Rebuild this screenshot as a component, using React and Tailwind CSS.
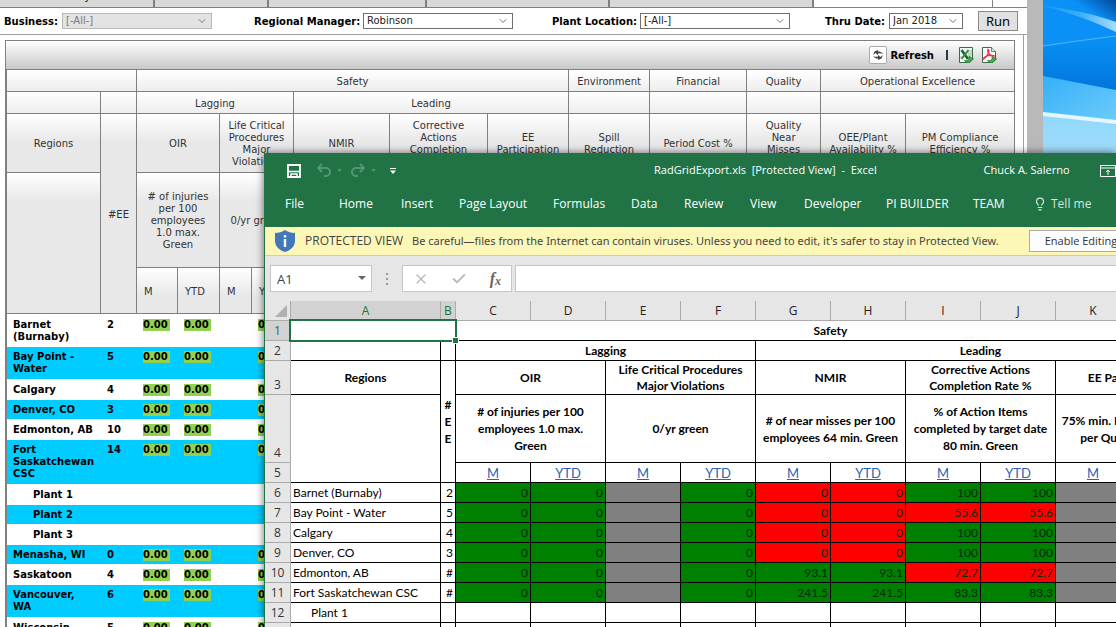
// /src/App.jsx
import { useState } from 'react';
import { Check, ChevronDown, Lightbulb, X } from 'lucide-react';

const regions = [
  { name: 'Barnet (Burnaby)', ee: 2, height: 'h-[33px]' },
  { name: 'Bay Point - Water', ee: 5, height: 'h-8' },
  { name: 'Calgary', ee: 4, height: 'h-[21px]' },
  { name: 'Denver, CO', ee: 3, height: 'h-[19px]' },
  { name: 'Edmonton, AB', ee: 10, height: 'h-[21px]' },
  { name: 'Fort Saskatchewan CSC', ee: 14, height: 'h-11' },
  { name: 'Plant 1', plant: true, height: 'h-[21px]' },
  { name: 'Plant 2', plant: true, height: 'h-[19px]' },
  { name: 'Plant 3', plant: true, height: 'h-[21px]' },
  { name: 'Menasha, WI', ee: 0, height: 'h-[19px]' },
  { name: 'Saskatoon', ee: 4, height: 'h-[21px]' },
  { name: 'Vancouver, WA', ee: 6, height: 'h-8' },
  { name: 'Wisconsin', ee: 5, height: 'h-[21px]' },
];

// g: 초록, r: 빨강, x: 회색(데이터 없음)
const fills = { g: 'bg-[#008000]', r: 'bg-[#ff0000]', x: 'bg-[#808080]' };

const sheetRows = [
  { no: 6, name: 'Barnet (Burnaby)', ee: '2', tone: 'ggxgrrggxx', values: ['0', '0', '', '0', '0', '0', '100', '100', '', ''] },
  { no: 7, name: 'Bay Point - Water', ee: '5', tone: 'ggxgrrrrxx', values: ['0', '0', '', '0', '0', '0', '55.6', '55.6', '', ''] },
  { no: 8, name: 'Calgary', ee: '4', tone: 'ggxgrrggxx', values: ['0', '0', '', '0', '0', '0', '100', '100', '', ''] },
  { no: 9, name: 'Denver, CO', ee: '3', tone: 'ggxgrrggxx', values: ['0', '0', '', '0', '0', '0', '100', '100', '', ''] },
  { no: 10, name: 'Edmonton, AB', ee: '#', tone: 'ggxgggrrxx', values: ['0', '0', '', '0', '93.1', '93.1', '72.7', '72.7', '', ''] },
  { no: 11, name: 'Fort Saskatchewan CSC', ee: '#', tone: 'ggxgggggxx', values: ['0', '0', '', '0', '241.5', '241.5', '83.3', '83.3', '', ''] },
  { no: 12, name: 'Plant 1', plant: true, ee: '', tone: '', values: ['', '', '', '', '', '', '', '', '', ''] },
  { no: '', name: '', ee: '', tone: '', values: ['', '', '', '', '', '', '', '', '', ''] },
];

const columns = ['C', 'D', 'E', 'F', 'G', 'H', 'I', 'J', 'K', 'L'];

const ribbonTabs = [
  { label: 'File', width: 'w-[54px]' },
  { label: 'Home', width: 'w-[62px]' },
  { label: 'Insert', width: 'w-[58px]' },
  { label: 'Page Layout', width: 'w-[94px]' },
  { label: 'Formulas', width: 'w-[78px]' },
  { label: 'Data', width: 'w-[53px]' },
  { label: 'Review', width: 'w-[66px]' },
  { label: 'View', width: 'w-[54px]' },
  { label: 'Developer', width: 'w-[82px]' },
  { label: 'PI BUILDER', width: 'w-[87px]' },
  { label: 'TEAM', width: 'w-[60px]' },
];

function Filter({ id, label, options, disabled, labelWidth, width, className }) {
  const [value, setValue] = useState(options[0]);
  return (
    <div className={`flex items-center ${className}`}>
      <label htmlFor={id} className={`${labelWidth} shrink-0 whitespace-nowrap font-bold`}>
        {label}
      </label>
      <div className={`relative ${width}`}>
        <select
          id={id}
          value={value}
          disabled={disabled}
          onChange={(e) => setValue(e.target.value)}
          className="block h-4 w-full appearance-none border border-[#707070] bg-white pl-[3px] leading-[14px] text-[#222] disabled:border-[#b8b8b8] disabled:bg-[#e3e3e3] disabled:text-[#7a7a7a] disabled:opacity-100"
        >
          {options.map((o) => (
            <option key={o}>{o}</option>
          ))}
        </select>
        <ChevronDown strokeWidth={2} className="pointer-events-none absolute right-1 top-0.5 size-3 text-[#777]" />
      </div>
    </div>
  );
}

function RefreshIcon() {
  return (
    <svg viewBox="0 0 12 12" className="size-3" fill="#444">
      <path d="M1 6l1.500-3.500L6 1v1.500c2 0 3.500.5 5 2.500-2-1-3.500-1-5-.5V6L3.500 4z" />
      <path d="M11 6L9.500 9.500 6 11V9.500C4 9.500 2.500 9 1 7c2 1 3.500 1 5 .5V6l2.500 2z" />
    </svg>
  );
}

function ExcelExportIcon() {
  return (
    <svg viewBox="0 0 16 16" className="size-4">
      <path d="M1.500 .5h13v11l-3 4h-10z" fill="#f1f8f2" stroke="#3b6a49" />
      <path d="M10 4h4M10 6h4M10 8h4M2 10h3" stroke="#8fc09a" />
      <path d="M3.500 3l6.500 9" stroke="#14662a" strokeWidth="2.600" />
      <path d="M10.500 3L3.500 12" stroke="#2f8a45" strokeWidth="2" />
      <path d="M6.500 13.500c3 .5 4.500-.5 4.500-2V9l4.500 3-4.500 4c-2 0-3.500-1-4.500-2.500z" fill="#45ad4d" stroke="#1d6b2c" strokeWidth=".7" />
    </svg>
  );
}

function PdfExportIcon() {
  return (
    <svg viewBox="0 0 16 16" className="size-4">
      <path d="M1.500 .5h9l4 4v8l-3 3h-10z" fill="#fff" stroke="#3d6a48" />
      <path d="M10.500 .5v4h4" fill="#dce9df" stroke="#3d6a48" strokeWidth=".8" />
      <path d="M7 2.500c2 1 .5 6-4.500 9.500 1-3 7-5 10.500-3-4 0-7-3-6-6.500z" fill="none" stroke="#e8344a" strokeWidth="1.500" />
      <path d="M6.500 13.500c3 .5 4.500-.5 4.500-2V9.500l4.500 2.500-4.500 4c-2 0-3.500-1-4.500-2.500z" fill="#45ad4d" stroke="#1d6b2c" strokeWidth=".7" />
    </svg>
  );
}

function HeadCell({ className = '', children, ...rest }) {
  return (
    <th
      className={`border-b border-r border-[#808080] bg-linear-to-b from-white to-[#e8e8e8] to-[28px] pt-0.5 pb-0 font-normal text-[#333] ${className}`}
      {...rest}
    >
      {children}
    </th>
  );
}

function Badge() {
  return <span className="block w-[27px] bg-[#92d050]">0.00</span>;
}

function RegionGrid() {
  return (
    <table className="w-full table-fixed border-separate border-spacing-0 border-l-2 border-[#808080] text-[10px] leading-3">
      <colgroup>
        <col className="w-[94px]" />
        <col className="w-9" />
        <col className="w-[41px]" />
        <col className="w-[42px]" />
        <col className="w-8" />
        <col className="w-[42px]" />
        <col className="w-24" />
        <col className="w-[98px]" />
        <col className="w-[81px]" />
        <col className="w-[81px]" />
        <col className="w-[97px]" />
        <col className="w-[74px]" />
        <col className="w-[85px]" />
        <col />
      </colgroup>
      <thead>
        <tr className="h-[22px]">
          <HeadCell colSpan={2} />
          <HeadCell colSpan={7}>Safety</HeadCell>
          <HeadCell>Environment</HeadCell>
          <HeadCell>Financial</HeadCell>
          <HeadCell>Quality</HeadCell>
          <HeadCell colSpan={2}>Operational Excellence</HeadCell>
        </tr>
        <tr className="h-[22px]">
          <HeadCell />
          <HeadCell />
          <HeadCell colSpan={4}>Lagging</HeadCell>
          <HeadCell colSpan={3}>Leading</HeadCell>
          <HeadCell />
          <HeadCell />
          <HeadCell />
          <HeadCell colSpan={2} />
        </tr>
        <tr className="h-[59px]">
          <HeadCell>Regions</HeadCell>
          <HeadCell rowSpan={3}>#EE</HeadCell>
          <HeadCell colSpan={2}>OIR</HeadCell>
          <HeadCell colSpan={2}>Life Critical Procedures Major Violations</HeadCell>
          <HeadCell>NMIR</HeadCell>
          <HeadCell className="px-3">Corrective Actions Completion Rate %</HeadCell>
          <HeadCell className="px-2">EE Participation</HeadCell>
          <HeadCell className="px-3">Spill Reduction</HeadCell>
          <HeadCell>Period Cost %</HeadCell>
          <HeadCell className="px-3">Quality Near Misses Rate</HeadCell>
          <HeadCell>OEE/Plant Availability %</HeadCell>
          <HeadCell>PM Compliance Efficiency %</HeadCell>
        </tr>
        <tr className="h-[95px]">
          <HeadCell rowSpan={2} />
          <HeadCell colSpan={2} className="px-2">
            # of injuries per 100 employees 1.0 max. Green
          </HeadCell>
          <HeadCell colSpan={2}>0/yr green</HeadCell>
          <HeadCell colSpan={8} />
        </tr>
        <tr className="h-[46px]">
          <HeadCell className="pl-[7px] text-left">M</HeadCell>
          <HeadCell className="pl-[7px] text-left">YTD</HeadCell>
          <HeadCell className="pl-[7px] text-left">M</HeadCell>
          <HeadCell className="pl-[7px] text-left">YTD</HeadCell>
          <HeadCell colSpan={8} />
        </tr>
      </thead>
      <tbody className="font-bold text-black">
        {regions.map((r, i) => {
          const pad = i % 2 ? 'pt-1' : 'pt-[5px]';
          return (
            <tr key={r.name} className={`align-top ${r.height} ${i % 2 ? 'bg-[#00ccff]' : 'bg-white'}`}>
              <td className={`${pad} pb-0 pr-1.5 ${r.plant ? 'pl-[26px]' : 'pl-1.5'}`}>{r.name}</td>
              <td className={`${pad} pb-0 pl-1.5`}>{r.ee}</td>
              <td className={`${pad} pb-0 pl-1.5`}>{!r.plant && <Badge />}</td>
              <td className={`${pad} pb-0 pl-1.5`}>{!r.plant && <Badge />}</td>
              <td />
              <td className={`${pad} pb-0 pl-1.5`}>{!r.plant && <Badge />}</td>
              <td colSpan={8} />
            </tr>
          );
        })}
      </tbody>
    </table>
  );
}

function BrowserWindow() {
  return (
    <main className="flex min-w-0 flex-1 flex-col bg-white font-['DejaVu_Sans',sans-serif] text-[10px] text-black">
      <div className="flex h-2 shrink-0 overflow-hidden border-b border-[#808080]">
        <div className="w-[155px] border-r-2 border-[#808080] bg-[#d8d8d8] pl-[42px]">
          <span className="-mt-[9px] block leading-3">Summary</span>
        </div>
        <div className="w-[114px] border-r-2 border-[#808080] bg-[#d8d8d8]" />
        <div className="w-[158px] border-r-2 border-[#808080] bg-[#d8d8d8]" />
        <div className="w-[183px] border-r-2 border-[#808080] bg-[#d8d8d8]" />
        <div className="w-[204px] border-r-2 border-[#808080] bg-[#d8d8d8]" />
        <div className="w-[179px] border-r border-[#808080]" />
      </div>

      <div className="flex h-[27px] shrink-0 items-center border-b border-[#a0a0a0] pl-1">
        <Filter id="business" label="Business:" options={['[-All-]']} disabled labelWidth="w-[58px]" width="w-[150px]" className="" />
        <Filter id="manager" label="Regional Manager:" options={['Robinson']} labelWidth="w-[109px]" width="w-[150px]" className="ml-[42px]" />
        <Filter id="plant" label="Plant Location:" options={['[-All-]']} labelWidth="w-[88px]" width="w-[150px]" className="ml-[39px]" />
        <Filter id="thru" label="Thru Date:" options={['Jan 2018']} labelWidth="w-[64px]" width="w-[74px]" className="ml-[35px]" />
        <button type="button" className="ml-[15px] h-5 w-10 border border-[#8a8a8a] bg-[#e1e1e1] font-['Noto_Sans',sans-serif] text-[13px] leading-[18px]">
          Run
        </button>
      </div>

      <div className="mr-[3px] flex-1 border-r border-[#a0a0a0] pl-[5px] pr-2 pt-[5px]">
        <div className="flex h-[30px] items-center border border-[#808080] bg-linear-to-b from-white to-[#c8c8c8] pr-[17px]">
          <button type="button" className="ml-auto flex items-center gap-[3px] text-[10px] font-bold">
            <span className="flex size-[18px] items-center justify-center rounded-xs border border-[#aaa] bg-white">
              <RefreshIcon />
            </span>
            Refresh
          </button>
          <span className="ml-3 h-2.5 w-0.5 bg-[#24394d]" />
          <button type="button" aria-label="Export to Excel" className="ml-2.5">
            <ExcelExportIcon />
          </button>
          <button type="button" aria-label="Export to PDF" className="ml-[7px]">
            <PdfExportIcon />
          </button>
        </div>
        <RegionGrid />
      </div>
    </main>
  );
}

function Wallpaper() {
  return (
    <svg viewBox="0 0 73 160" preserveAspectRatio="none" className="h-40 w-[73px] shrink-0">
      <defs>
        <linearGradient id="sky" x1="0" y1="1" x2="1" y2="0">
          <stop offset="0" stopColor="#0a90f6" />
          <stop offset=".7" stopColor="#0a90f6" />
          <stop offset="1" stopColor="#04489c" />
        </linearGradient>
        <linearGradient id="beam" x1="0" y1="0" x2="1" y2="0">
          <stop offset="0" stopColor="#0c98f8" />
          <stop offset=".5" stopColor="#3badf8" />
          <stop offset="1" stopColor="#a5dcfd" />
        </linearGradient>
        <linearGradient id="deep" x1="0" y1="0" x2="0" y2="1">
          <stop offset="0" stopColor="#0892f4" />
          <stop offset="1" stopColor="#0274dc" />
        </linearGradient>
        <linearGradient id="glow" x1="0" y1="0" x2="1" y2="1">
          <stop offset="0" stopColor="#35b0f8" />
          <stop offset="1" stopColor="#6dcbfb" />
        </linearGradient>
        <linearGradient id="floor" x1="0" y1="0" x2="0" y2="1">
          <stop offset="0" stopColor="#8fd8fb" />
          <stop offset="1" stopColor="#a4dcfa" />
        </linearGradient>
      </defs>
      <rect width="73" height="50" fill="url(#sky)" />
      <path d="M0 6Q40 16 73 32V22Q50 14 28 10L0 5z" fill="url(#beam)" />
      <path d="M0 46Q40 40 73 36V92H0z" fill="url(#deep)" />
      <path d="M0 46Q40 40 73 36" stroke="#4fb8fa" fill="none" />
      <path d="M0 76L73 90V122L0 113z" fill="url(#glow)" />
      <path d="M0 113L73 122V160H0z" fill="url(#floor)" />
      <path d="M0 112L73 120V124L0 116z" fill="#e4f7ff" />
    </svg>
  );
}

function CaretIcon() {
  return (
    <svg viewBox="0 0 6 4" className="h-[3px] w-[5px]" fill="currentColor">
      <path d="M0 0h6L3 4z" />
    </svg>
  );
}

function TitleBar() {
  return (
    <div className="flex h-[35px] items-center pl-[21px] text-[11px]">
      <button type="button" aria-label="Save">
        <svg viewBox="0 0 16 16" className="size-4" fill="none" stroke="#fff" strokeWidth="1.800">
          <path d="M2 2h12v12H2z" />
          <path d="M2 8.500h12M5 14v-3h6v3" strokeWidth="1.500" />
        </svg>
      </button>
      <button type="button" aria-label="Undo" className="ml-3.5 flex items-center gap-[5px] text-[#559672]">
        <svg viewBox="0 0 16 16" className="size-4" fill="none" stroke="currentColor" strokeWidth="2">
          <path d="M6 1L2 5l4 4M2 5h8a4 4 0 0 1 0 8H8" />
        </svg>
        <CaretIcon />
      </button>
      <button type="button" aria-label="Redo" className="ml-2 flex items-center gap-[5px] text-[#559672]">
        <svg viewBox="0 0 16 16" className="size-4" fill="none" stroke="currentColor" strokeWidth="2">
          <path d="M10 1l4 4-4 4M14 5H6a4 4 0 0 0 0 8h2" />
        </svg>
        <CaretIcon />
      </button>
      <button type="button" aria-label="Customize toolbar" className="ml-3.5">
        <svg viewBox="0 0 6 6" className="size-1.5" fill="#fff"><path d="M0 0h6v1H0zM0 2.500h6L3 6z" /></svg>
      </button>
      <h1 className="ml-[258px] w-[334px] whitespace-pre">RadGridExport.xls  [Protected View]  -  Excel</h1>
      <span className="w-[118px]">Chuck A. Salerno</span>
      <button type="button" aria-label="Ribbon display options" className="shrink-0">
        <svg viewBox="0 0 16 12" className="h-3 w-4" fill="none" stroke="#fff">
          <path d="M.5.5h15v11H.5zM.5 3h15M8 10V5M6 7l2-2 2 2" />
        </svg>
      </button>
    </div>
  );
}

function FormulaBar() {
  return (
    <div className="flex h-[45px] items-center pl-[5px] text-[#444]">
      <div className="relative w-[102px]">
        <input aria-label="Name box" defaultValue="A1" className="block h-[27px] w-full border border-[#c6c6c6] bg-white pl-1.5 text-[13px]" />
        <svg viewBox="0 0 8 4" className="absolute right-1.5 top-[11px] h-1 w-2" fill="#666"><path d="M0 0h8L4 4z" /></svg>
      </div>
      <svg viewBox="0 0 2 12" className="mx-3.5 h-3 w-0.5" fill="#999"><path d="M0 0h2v2H0zM0 5h2v2H0zM0 10h2v2H0z" /></svg>
      <div className="flex h-[27px] w-[110px] items-center justify-between border border-[#c6c6c6] bg-white px-2.5">
        <button type="button" aria-label="Cancel"><X className="size-4 text-[#bbb]" /></button>
        <button type="button" aria-label="Enter"><Check className="size-4 text-[#bbb]" strokeWidth={3} /></button>
        <button type="button" className="flex items-center font-['Liberation_Serif',serif] text-base leading-4 font-bold italic text-[#666]">
          f<span className="pt-1 text-xs">x</span>
        </button>
      </div>
      <input aria-label="Formula" className="ml-[3px] h-[27px] min-w-0 flex-1 border border-r-0 border-[#c6c6c6] bg-white" />
    </div>
  );
}

function RowNo({ children, active }) {
  return (
    <th
      scope="row"
      className={`border-b border-r border-[#ababab] p-0 text-center align-bottom font-['Open_Sans',sans-serif] text-xs leading-[18px] font-normal ${
        active ? 'bg-[#d2d2d2] text-[#217346]' : 'bg-[#e6e6e6] text-[#333]'
      }`}
    >
      {children}
    </th>
  );
}

function Cell({ as: Tag = 'td', className = '', children, ...rest }) {
  return (
    <Tag className={`border-b border-r border-black p-0 ${className}`} {...rest}>
      {children}
    </Tag>
  );
}

function Sheet() {
  return (
    <table className="w-[941px] table-fixed border-separate border-spacing-0 bg-white font-['Lato',sans-serif] text-xs leading-4 text-black">
      <colgroup>
        <col className="w-[26px]" />
        <col className="w-[150px]" />
        <col className="w-[15px]" />
        {columns.map((c) => (
          <col key={c} className="w-[75px]" />
        ))}
      </colgroup>
      <thead className="font-['Open_Sans',sans-serif]">
        <tr className="h-5 bg-[#e6e6e6]">
          <th className="border-b border-r border-[#ababab] p-0">
            <svg viewBox="0 0 12 12" className="ml-auto mr-[3px] size-3" fill="#b0b0b0"><path d="M12 0v12H0z" /></svg>
          </th>
          <th className="border-b border-r border-[#ababab] bg-[#d2d2d2] p-0 font-normal text-[#217346]">A</th>
          <th className="border-b border-r border-[#ababab] bg-[#d2d2d2] p-0 font-normal text-[#217346]">B</th>
          {columns.map((c) => (
            <th key={c} className="border-b border-r border-[#ababab] p-0 font-normal text-[#222]">{c}</th>
          ))}
        </tr>
      </thead>
      <tbody>
        <tr className="h-5">
          <RowNo active>1</RowNo>
          <Cell colSpan={2} className="relative">
            <span className="absolute -inset-x-0.5 -top-0.5 -bottom-0.5 border-2 border-[#217346]" />
            <span className="absolute -right-[3px] -bottom-[3px] size-[5px] bg-[#217346] outline outline-white" />
          </Cell>
          <Cell as="th" colSpan={10}>Safety</Cell>
        </tr>
        <tr className="h-5">
          <RowNo>2</RowNo>
          <Cell />
          <Cell />
          <Cell as="th" colSpan={4}>Lagging</Cell>
          <Cell as="th" colSpan={6}>Leading</Cell>
        </tr>
        <tr className="h-[34px]">
          <RowNo>3</RowNo>
          <Cell as="th">Regions</Cell>
          <Cell as="th" rowSpan={3} className="px-0.5 leading-[17px]"># E E</Cell>
          <Cell as="th" colSpan={2}>OIR</Cell>
          <Cell as="th" colSpan={2} className="px-2">Life Critical Procedures Major Violations</Cell>
          <Cell as="th" colSpan={2}>NMIR</Cell>
          <Cell as="th" colSpan={2} className="px-4">Corrective Actions Completion Rate %</Cell>
          <Cell as="th" colSpan={2}>EE Participation</Cell>
        </tr>
        <tr className="h-[68px] leading-[17px]">
          <RowNo>4</RowNo>
          <Cell rowSpan={2} />
          <Cell as="th" colSpan={2} className="px-4"># of injuries per 100 employees 1.0 max. Green</Cell>
          <Cell as="th" colSpan={2}>0/yr green</Cell>
          <Cell as="th" colSpan={2}># of near misses per 100 employees 64 min. Green</Cell>
          <Cell as="th" colSpan={2}>% of Action Items completed by target date 80 min. Green</Cell>
          <Cell as="th" colSpan={2}>75% min. EE Participation<br />per Quarter. Green</Cell>
        </tr>
        <tr className="h-5 text-[13px]">
          <RowNo>5</RowNo>
          {columns.map((c, i) => (
            <Cell key={c} className="text-center">
              <a href="#sort" className="text-[#2a63b5] underline">{i % 2 ? 'YTD' : 'M'}</a>
            </Cell>
          ))}
        </tr>
        {sheetRows.map((row) => (
          <tr key={row.no} className="h-5">
            <RowNo>{row.no}</RowNo>
            <Cell className={`whitespace-nowrap ${row.plant ? 'pl-5' : 'pl-0.5'}`}>{row.name}</Cell>
            <Cell className="pr-0.5 text-right">{row.ee}</Cell>
            {row.values.map((v, i) => (
              <Cell key={columns[i]} className={`pr-0.5 text-right text-[#0b2b0b] ${fills[row.tone[i]] || ''}`}>
                {v}
              </Cell>
            ))}
          </tr>
        ))}
      </tbody>
    </table>
  );
}

function ExcelWindow() {
  return (
    <section className="absolute bottom-0 left-[264px] right-0 top-[153px] overflow-hidden border-l border-[#217346] bg-[#e6e6e6] font-['Open_Sans',sans-serif] text-xs shadow-[0_0_8px_rgba(0,0,0,0.6)]">
      <header className="h-[74px] overflow-hidden whitespace-nowrap bg-[#217346] text-white">
        <TitleBar />
        <nav className="flex h-8 items-center pl-5">
          {ribbonTabs.map((t) => (
            <button key={t.label} type="button" className={`shrink-0 text-left ${t.width}`}>
              {t.label}
            </button>
          ))}
          <button type="button" className="flex shrink-0 items-center gap-1 text-[#d5e8dc]">
            <Lightbulb className="size-3.5" />
            Tell me
          </button>
        </nav>
      </header>

      <div className="flex h-[29px] items-center overflow-hidden whitespace-nowrap border-b border-[#d8d08c] bg-[#fcf7b6] pl-2.5 text-[#444]">
        <svg viewBox="0 0 20 22" className="h-[22px] w-5 shrink-0">
          <path d="M10 0c3 2 6 3 10 3v8c0 5-4 9-10 11C4 20 0 16 0 11V3c4 0 7-1 10-3z" fill="#4377bd" />
          <path d="M8.800 5h2.400v2.400H8.800zM8.800 9h2.400v8H8.800z" fill="#fff" />
        </svg>
        <strong className="ml-2.5 w-[107px] shrink-0 font-normal">PROTECTED VIEW</strong>
        <p className="w-[617px] shrink-0 font-['Noto_Sans',sans-serif] text-[11px]">
          Be careful—files from the Internet can contain viruses. Unless you need to edit, it's safer to stay in Protected View.
        </p>
        <button type="button" className="h-[22px] w-[104px] shrink-0 border border-[#ababab] bg-[#fdfdfd] text-[11px] text-[#333]">
          Enable Editing
        </button>
      </div>

      <FormulaBar />
      <Sheet />
    </section>
  );
}

export default function App() {
  return (
    <div className="relative flex h-screen overflow-hidden bg-[#0a86ee]">
      <BrowserWindow />
      <div className="w-4 shrink-0 bg-[#b9b9b9]" />
      <Wallpaper />
      <ExcelWindow />
    </div>
  );
}
